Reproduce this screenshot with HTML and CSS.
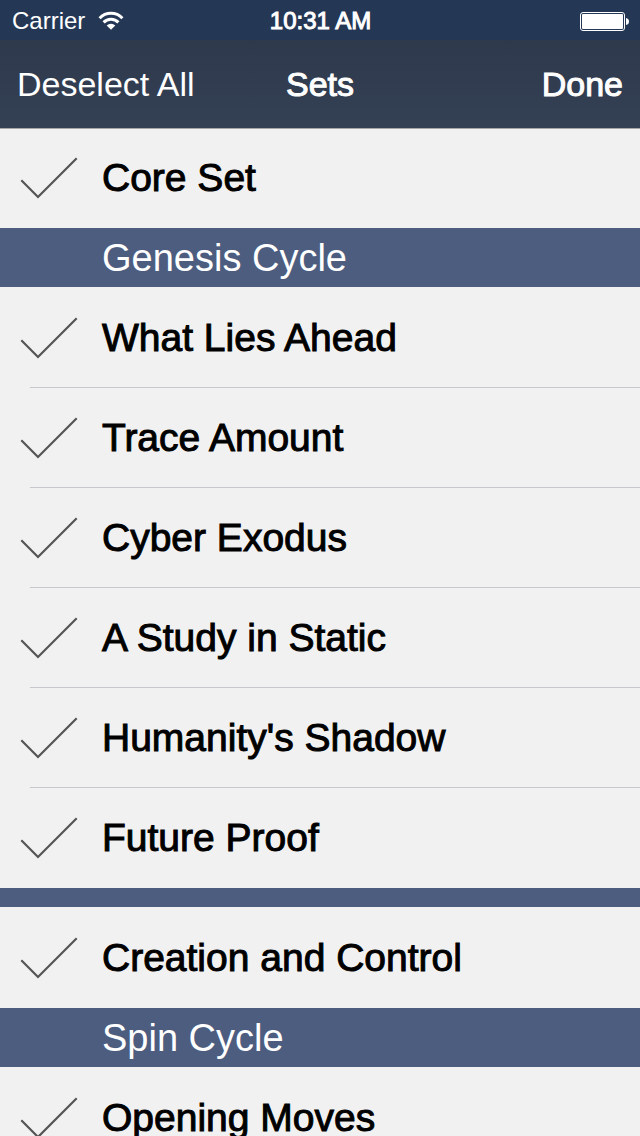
FILE: index.html
```html
<!DOCTYPE html>
<html lang="en">
  <head>
    <meta charset="UTF-8" />
    <meta name="viewport" content="width=device-width, initial-scale=1" />
    <title>Sets</title>
    <link rel="stylesheet" href="styles.css">
  </head>
  <body>
    <svg class="sprite" aria-hidden="true">
      <symbol id="check" viewBox="0 0 58 42">
        <path d="M1.3 23.3 L18 40 L56.7 1.3" fill="none" stroke="#555" stroke-width="2.2" />
      </symbol>
    </svg>

    <div class="status">
      <div class="status_left">
        <span>Carrier</span>
        <svg class="wifi" viewBox="0 0 26 20" aria-hidden="true">
          <g fill="none" stroke="#fff" stroke-width="3">
            <path d="M1.6 7.2 A15.8 15.8 0 0 1 24.4 7.2" />
            <path d="M5.6 11.4 A10.2 10.2 0 0 1 20.4 11.4" />
          </g>
          <path d="M8.7 14.4 A6.1 6.1 0 0 1 17.3 14.4 L13 18.8 Z" fill="#fff" />
        </svg>
      </div>
      <span class="status_time">10:31 AM</span>
      <div class="status_right">
        <svg class="battery" viewBox="0 0 49 19" aria-hidden="true">
          <rect x="0.5" y="0.5" width="44" height="18" rx="2.5" fill="none" stroke="#fff" />
          <rect x="2" y="2" width="41" height="15" rx="1" fill="#fff" />
          <path d="M46 6 Q49 6.5 49 9.5 Q49 12.5 46 13 Z" fill="#fff" />
        </svg>
      </div>
    </div>

    <header class="nav">
      <button class="nav_left" type="button">Deselect All</button>
      <h1>Sets</h1>
      <button class="nav_right" type="button">Done</button>
    </header>

    <main class="list">
      <section>
        <label class="row">
          <input type="checkbox" checked />
          <svg class="check"><use href="#check" /></svg>
          <span>Core Set</span>
        </label>
      </section>

      <section>
        <h2>Genesis Cycle</h2>
        <label class="row">
          <input type="checkbox" checked />
          <svg class="check"><use href="#check" /></svg>
          <span>What Lies Ahead</span>
        </label>
        <label class="row">
          <input type="checkbox" checked />
          <svg class="check"><use href="#check" /></svg>
          <span>Trace Amount</span>
        </label>
        <label class="row">
          <input type="checkbox" checked />
          <svg class="check"><use href="#check" /></svg>
          <span>Cyber Exodus</span>
        </label>
        <label class="row">
          <input type="checkbox" checked />
          <svg class="check"><use href="#check" /></svg>
          <span>A Study in Static</span>
        </label>
        <label class="row">
          <input type="checkbox" checked />
          <svg class="check"><use href="#check" /></svg>
          <span>Humanity's Shadow</span>
        </label>
        <label class="row">
          <input type="checkbox" checked />
          <svg class="check"><use href="#check" /></svg>
          <span>Future Proof</span>
        </label>
      </section>

      <section class="divided">
        <label class="row">
          <input type="checkbox" checked />
          <svg class="check"><use href="#check" /></svg>
          <span>Creation and Control</span>
        </label>
      </section>

      <section>
        <h2>Spin Cycle</h2>
        <label class="row">
          <input type="checkbox" checked />
          <svg class="check"><use href="#check" /></svg>
          <span>Opening Moves</span>
        </label>
      </section>
    </main>
  </body>
</html>
```
FILE: styles.css
```css
* {
  box-sizing: border-box;
}

body {
  display: flex;
  flex-direction: column;
  height: 100vh;
  margin: 0;
  font-family: "Helvetica Neue", "Liberation Sans", Arial, sans-serif;
  background: #f1f1f1;
}

.sprite {
  position: absolute;
  width: 0;
  height: 0;
}

/* status bar */
.status {
  display: grid;
  grid-template-columns: 1fr auto 1fr;
  flex: none;
  align-items: center;
  height: 40px;
  padding: 0 11px 0 12px;
  font-size: 24px;
  line-height: 42px;
  color: #fff;
  background: #243755;
}

.status_left {
  display: flex;
  align-items: center;
  gap: 13px;
}

.status_right {
  display: flex;
  justify-content: flex-end;
}

.status_time {
  -webkit-text-stroke: 1px #fff;
}

.wifi {
  width: 26px;
  height: 20px;
}

.battery {
  width: 49px;
  height: 19px;
}

/* navigation bar */
.nav {
  display: grid;
  grid-template-columns: 1fr auto 1fr;
  flex: none;
  align-items: center;
  height: 89px;
  padding: 0 17px;
  border-bottom: 1px solid #a7a7aa;
  color: #fff;
  background: linear-gradient(#2e394c, #344054);
}

.nav h1,
.nav button {
  margin: 0;
  padding: 0;
  font-family: inherit;
  font-size: 34px;
  font-weight: normal;
  line-height: 40px;
}

.nav button {
  border: 0;
  color: inherit;
  background: none;
  cursor: pointer;
}

.nav h1,
.nav .nav_right {
  -webkit-text-stroke: 1px #fff;
}

.nav_left {
  justify-self: start;
}

.nav_right {
  justify-self: end;
}

/* list */
.list {
  flex: 1;
  min-height: 0;
  margin-top: -1px;
  overflow-y: auto;
  scrollbar-width: none;
}

.list h2 {
  height: 60px;
  margin: 0;
  padding-left: 102px;
  border-bottom: 1px solid #f1f1f1;
  font-size: 38px;
  font-weight: normal;
  line-height: 60px;
  color: #fff;
  background: #4c5d80;
}

.divided::before {
  content: "";
  display: block;
  height: 19px;
  margin-bottom: 1px;
  background: #4c5d80;
}

.row {
  display: flex;
  align-items: center;
  gap: 24px;
  height: 100px;
  padding-left: 20px;
  font-size: 39px;
  line-height: 48px;
  color: #000;
  cursor: pointer;
  -webkit-text-stroke: 1px #000;
}

/* separator starts 30px in, between neighbouring rows only */
.row:not(:last-child) {
  background: linear-gradient(#c8c7cc, #c8c7cc) 30px 100% / 100% 1px no-repeat;
}

.row input {
  position: absolute;
  margin: 0;
  opacity: 0;
}

.check {
  flex: none;
  visibility: hidden;
  width: 58px;
  height: 42px;
}

.row input:checked + .check {
  visibility: visible;
}
```
